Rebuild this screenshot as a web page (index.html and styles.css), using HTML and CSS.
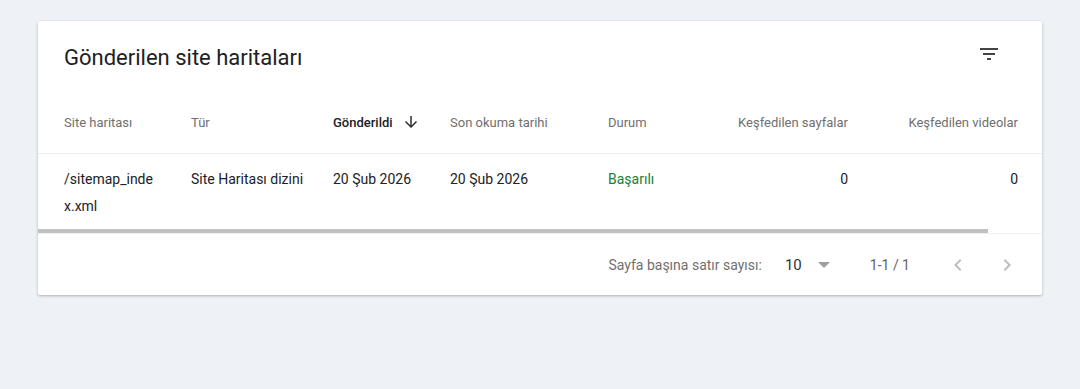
FILE: index.html
```html
<!DOCTYPE html>
<html lang="tr">
<head>
    <meta charset="UTF-8">
    <meta name="viewport" content="width=device-width, initial-scale=1.0">
    <title>Gönderilen site haritaları</title>
    <link rel="stylesheet" href="styles.css">
</head>
<body>
    <div class="card">
        <div class="card-header">
            <h2>Gönderilen site haritaları</h2>
            <button class="icon-button filter" title="Filtrele">
                <svg width="24" height="24" viewBox="0 0 24 24"><path d="M10 18h4v-2h-4v2zM3 6v2h18V6H3zm3 7h12v-2H6v2z" fill="currentColor"/></svg>
            </button>
        </div>

        <table class="sitemaps">
            <colgroup>
                <col style="width: 153px">
                <col style="width: 142px">
                <col style="width: 117px">
                <col style="width: 158px">
                <col style="width: 92px">
                <col style="width: 148px">
                <col style="width: 194px">
            </colgroup>
            <thead>
                <tr>
                    <th class="first">Site haritası</th>
                    <th>Tür</th>
                    <th class="sorted">Gönderildi
                        <svg class="sort-arrow" width="18" height="18" viewBox="0 0 24 24"><path d="M20 12l-1.41-1.41L13 16.17V4h-2v12.17l-5.58-5.59L4 12l8 8 8-8z" fill="currentColor"/></svg>
                    </th>
                    <th>Son okuma tarihi</th>
                    <th>Durum</th>
                    <th class="num">Keşfedilen sayfalar</th>
                    <th class="num last">Keşfedilen videolar</th>
                </tr>
            </thead>
            <tbody>
                <tr>
                    <td class="first path">/sitemap_index.xml</td>
                    <td>Site Haritası dizini</td>
                    <td>20 Şub 2026</td>
                    <td>20 Şub 2026</td>
                    <td class="status-ok">Başarılı</td>
                    <td class="num">0</td>
                    <td class="num last">0</td>
                </tr>
            </tbody>
        </table>
        <div class="scroll-thumb"></div>

        <div class="pager">
            <span class="pager-label">Sayfa başına satır sayısı:</span>
            <span class="page-size">10</span>
            <span class="dropdown-arrow"></span>
            <span class="range">1-1 / 1</span>
            <button class="icon-button nav" disabled>
                <svg width="24" height="24" viewBox="0 0 24 24"><path d="M15.41 7.41L14 6l-6 6 6 6 1.41-1.41L10.83 12z" fill="currentColor"/></svg>
            </button>
            <button class="icon-button nav" disabled>
                <svg width="24" height="24" viewBox="0 0 24 24"><path d="M10 6L8.59 7.41 13.17 12l-4.58 4.59L10 18l6-6z" fill="currentColor"/></svg>
            </button>
        </div>
    </div>
</body>
</html>
```

FILE: styles.css
```css
body {
    font-family: Roboto, 'Liberation Sans', Arial, sans-serif;
    margin: 0;
    padding: 21px 38px;
    background: #eef2f7;
    color: #202124;
}

.card {
    background: white;
    border-radius: 2px;
    box-shadow: 0 1px 3px rgba(0,0,0,0.28);
}

.card-header {
    display: flex;
    align-items: center;
    justify-content: space-between;
    height: 70px;
    padding: 0 41px 0 26px;
}

.card-header h2 {
    margin: 2px 0 0;
    font-size: 22px;
    font-weight: 400;
    color: #202124;
}

.icon-button {
    display: flex;
    align-items: center;
    justify-content: center;
    width: 24px;
    height: 24px;
    padding: 0;
    border: none;
    background: none;
    color: #444;
    cursor: pointer;
}

.icon-button.filter {
    margin-bottom: 5px;
}

.sitemaps {
    width: 100%;
    border-collapse: collapse;
    table-layout: fixed;
}

.sitemaps th,
.sitemaps td {
    padding: 0 12px 0 0;
    text-align: left;
    vertical-align: top;
}

.sitemaps th {
    height: 62px;
    vertical-align: middle;
    font-size: 13px;
    font-weight: 400;
    color: #6f6f6f;
    border-bottom: 1px solid #ececec;
}

.sitemaps th.sorted {
    color: #202124;
    font-weight: 500;
}

.sort-arrow {
    vertical-align: -4px;
    margin-left: 6px;
    color: #303030;
}

.sitemaps td {
    padding-top: 12px;
    height: 63px;
    font-size: 14px;
    line-height: 27px;
}

.sitemaps .first {
    padding-left: 26px;
    padding-right: 31px;
}

.sitemaps .path {
    word-break: break-all;
}

.sitemaps .num {
    text-align: right;
    padding-right: 0;
}

.sitemaps .last {
    padding-right: 24px;
}

.status-ok {
    color: #188038;
}

.scroll-thumb {
    width: 950px;
    height: 4px;
    background: #c1c1c1;
}

.pager {
    display: flex;
    align-items: center;
    justify-content: flex-end;
    height: 61px;
    padding-right: 23px;
    border-top: 1px solid #f0f0f0;
    font-size: 14px;
    color: #6f6f6f;
}

.page-size {
    margin-left: 23px;
    font-size: 15px;
    color: #333;
}

.dropdown-arrow {
    margin-left: 16px;
    border-left: 6px solid transparent;
    border-right: 6px solid transparent;
    border-top: 6px solid #9e9e9e;
}

.range {
    margin-left: 40px;
    color: #5f6368;
}

.nav {
    color: #bdbdbd;
    margin-left: 25px;
}

.range + .nav {
    margin-left: 36px;
}
```
